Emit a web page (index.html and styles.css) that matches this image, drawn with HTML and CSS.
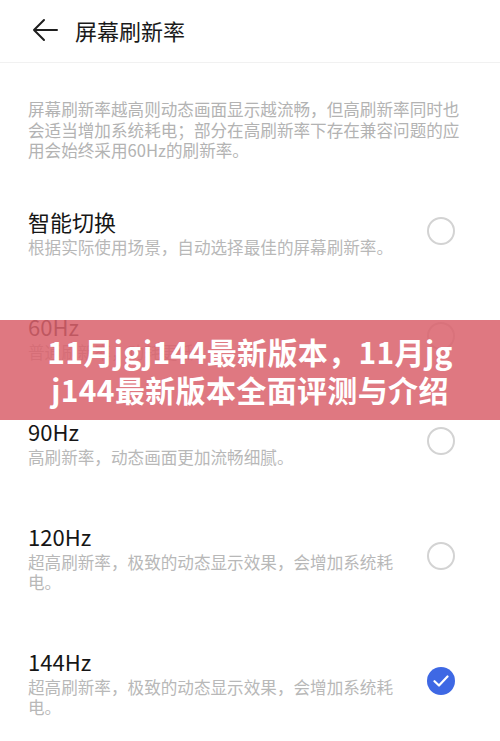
FILE: index.html
```html
<!DOCTYPE html>
<html lang="zh-CN">
<head>
<meta charset="utf-8">
<title>屏幕刷新率</title>
<link rel="stylesheet" href="styles.css">
</head>
<body>
<div class="screen">
  <header class="topbar">
    <svg class="back" width="26" height="24" viewBox="0 0 26 24" aria-hidden="true">
      <path d="M25 12H2 M12 2L2 12L12 22" fill="none" stroke="#1f1f1f" stroke-width="2" stroke-linecap="round" stroke-linejoin="round"/>
    </svg>
    <h1 class="title">屏幕刷新率</h1>
  </header>

  <p class="intro">屏幕刷新率越高则动态画面显示越流畅，但高刷新率同时也会适当增加系统耗电；部分在高刷新率下存在兼容问题的应用会始终采用60Hz的刷新率。</p>

  <ul class="options">
    <li class="option">
      <div class="text">
        <div class="name">智能切换</div>
        <div class="hint">根据实际使用场景，自动选择最佳的屏幕刷新率。</div>
      </div>
      <span class="radio"></span>
    </li>
    <li class="option">
      <div class="text">
        <div class="name">60Hz</div>
        <div class="hint">普通刷新率，功耗更低。</div>
      </div>
      <span class="radio"></span>
    </li>
    <li class="option">
      <div class="text">
        <div class="name">90Hz</div>
        <div class="hint">高刷新率，动态画面更加流畅细腻。</div>
      </div>
      <span class="radio"></span>
    </li>
    <li class="option">
      <div class="text">
        <div class="name">120Hz</div>
        <div class="hint">超高刷新率，极致的动态显示效果，会增加系统耗电。</div>
      </div>
      <span class="radio"></span>
    </li>
    <li class="option">
      <div class="text">
        <div class="name">144Hz</div>
        <div class="hint">超高刷新率，极致的动态显示效果，会增加系统耗电。</div>
      </div>
      <span class="radio checked">
        <svg width="16" height="12" viewBox="0 0 16 12" aria-hidden="true">
          <path d="M1.5 6.2L6 10.5L14.5 1.5" fill="none" stroke="#fff" stroke-width="2.2" stroke-linecap="round" stroke-linejoin="round"/>
        </svg>
      </span>
    </li>
  </ul>

  <div class="banner">11月jgj144最新版本，11月jgj144最新版本全面评测与介绍</div>
</div>
</body>
</html>
```

FILE: styles.css
```css
* { box-sizing: border-box; }

html, body {
  margin: 0;
  padding: 0;
  background: #ffffff;
}

body {
  font-family: "Noto Sans CJK SC", "Noto Sans", sans-serif;
  color: #1a1a1a;
}

.screen {
  position: relative;
  width: 500px;
  height: 741px;
  overflow: hidden;
  background: #ffffff;
}

.topbar {
  height: 63px;
  display: flex;
  align-items: center;
  padding: 0 0 3px 32px;
  gap: 17px;
  border-bottom: 1px solid #f1f1f1;
}

.back { display: block; }

.title {
  margin: 0;
  font-size: 22px;
  font-weight: 400;
  line-height: 30px;
  color: #1a1a1a;
}

.intro {
  margin: 36px 0 0 0;
  padding: 0 28px;
  width: 500px;
  font-size: 16.6px;
  line-height: 20.5px;
  color: #b3b3b3;
}

.options {
  list-style: none;
  margin: 18px 0 0 0;
  padding: 0;
}

.option {
  display: flex;
  align-items: center;
  justify-content: space-between;
  padding: 27px 45px 27px 28px;
}

.text { width: 372px; }

.name {
  font-size: 22px;
  line-height: 30px;
  color: #161616;
}

.hint {
  margin-top: 1px;
  font-size: 16.6px;
  line-height: 20px;
  color: #b8b8b8;
}

.radio {
  flex: none;
  width: 28px;
  height: 28px;
  border: 2px solid #d3d3d3;
  border-radius: 50%;
  display: flex;
  align-items: center;
  justify-content: center;
}

.radio.checked {
  border: none;
  background: #3e68e4;
}

.banner {
  position: absolute;
  top: 320px;
  left: 0;
  width: 500px;
  height: 100px;
  display: flex;
  align-items: center;
  justify-content: center;
  padding: 0 45.5px;
  background: rgba(218, 98, 108, 0.86);
  color: #ffffff;
  font-size: 30px;
  font-weight: 700;
  line-height: 38px;
  letter-spacing: 0.35px;
  text-align: center;
  word-break: break-all;
}
```
